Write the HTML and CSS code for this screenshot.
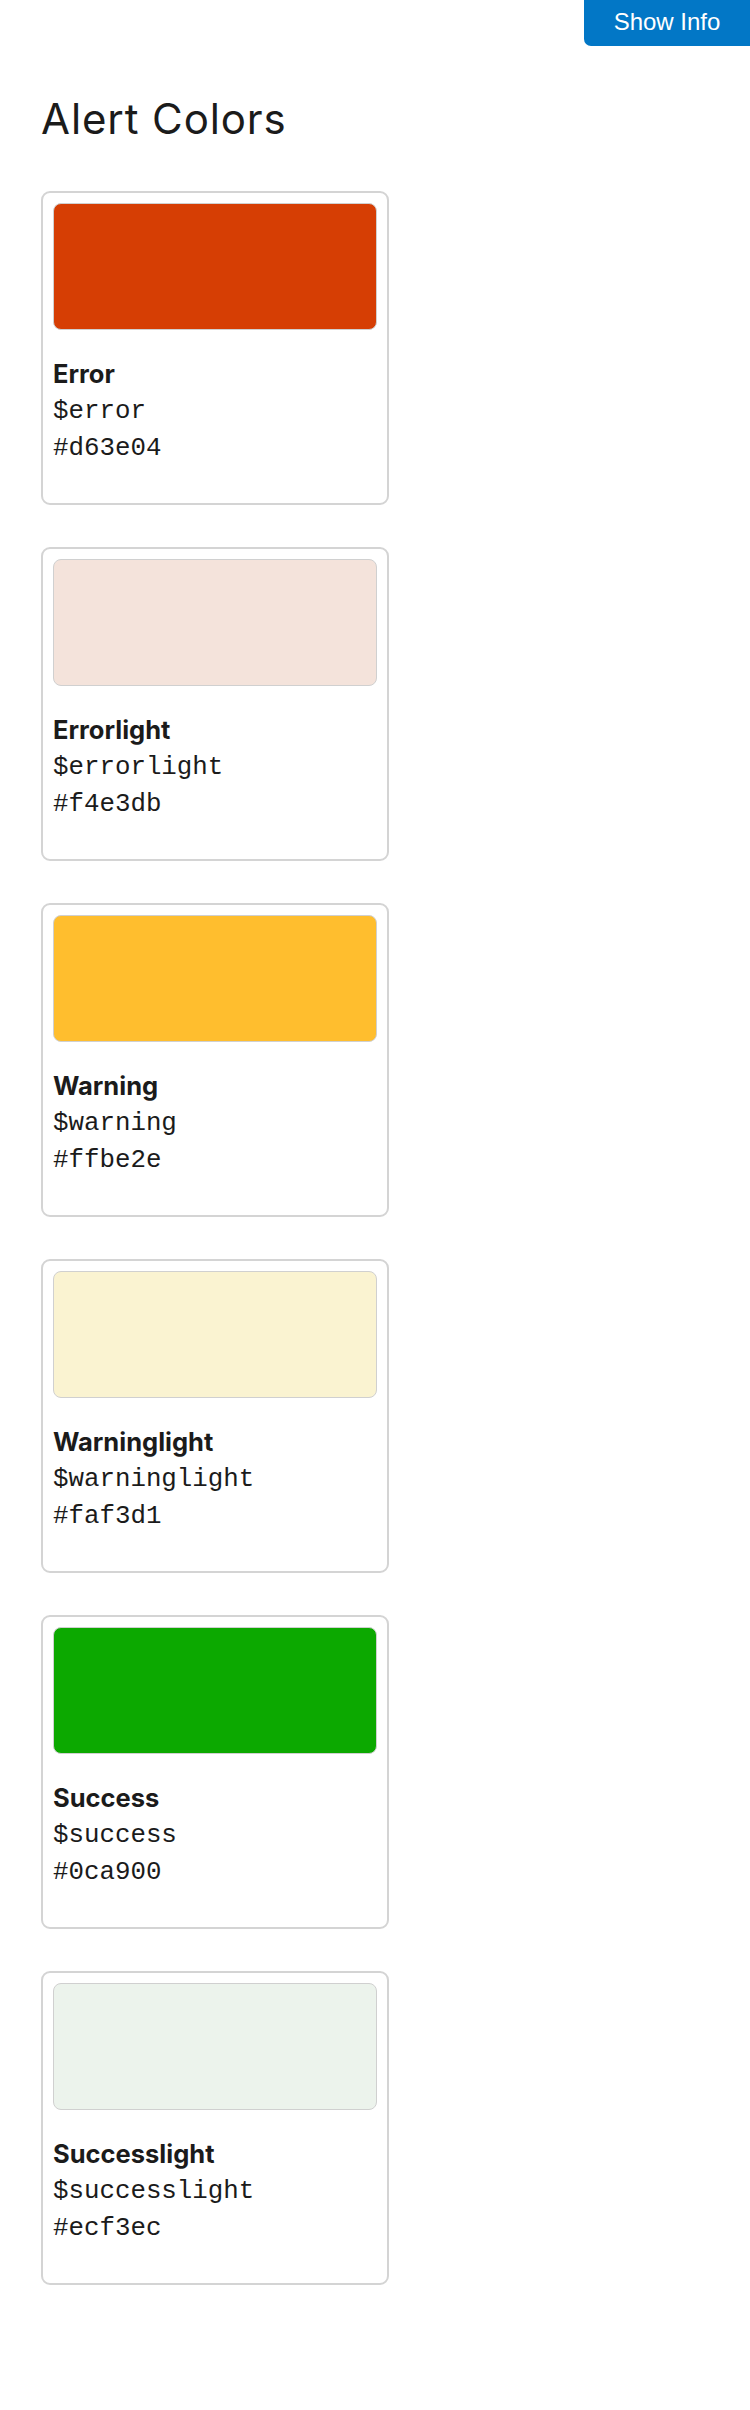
FILE: index.html
```html
<!DOCTYPE html>
<html lang="en">
<head>
<meta charset="utf-8">
<title>Alert Colors</title>
<link rel="stylesheet" href="styles.css">
</head>
<body>
<div class="topbar">
  <button class="info-btn" type="button">Show Info</button>
</div>
<main class="page">
  <h1 class="title">Alert Colors</h1>
  <div class="cards">
    <div class="card">
      <div class="swatch swatch-error"></div>
      <div class="info">
        <div class="name">Error</div>
        <div class="code">$error</div>
        <div class="code">#d63e04</div>
      </div>
    </div>
    <div class="card">
      <div class="swatch swatch-errorlight"></div>
      <div class="info">
        <div class="name">Errorlight</div>
        <div class="code">$errorlight</div>
        <div class="code">#f4e3db</div>
      </div>
    </div>
    <div class="card">
      <div class="swatch swatch-warning"></div>
      <div class="info">
        <div class="name">Warning</div>
        <div class="code">$warning</div>
        <div class="code">#ffbe2e</div>
      </div>
    </div>
    <div class="card">
      <div class="swatch swatch-warninglight"></div>
      <div class="info">
        <div class="name">Warninglight</div>
        <div class="code">$warninglight</div>
        <div class="code">#faf3d1</div>
      </div>
    </div>
    <div class="card">
      <div class="swatch swatch-success"></div>
      <div class="info">
        <div class="name">Success</div>
        <div class="code">$success</div>
        <div class="code">#0ca900</div>
      </div>
    </div>
    <div class="card">
      <div class="swatch swatch-successlight"></div>
      <div class="info">
        <div class="name">Successlight</div>
        <div class="code">$successlight</div>
        <div class="code">#ecf3ec</div>
      </div>
    </div>
  </div>
</main>
</body>
</html>
```

FILE: styles.css
```css
html, body {
  margin: 0;
  padding: 0;
  background: #ffffff;
  color: #1b1b1b;
  font-family: Inter, "Liberation Sans", sans-serif;
}

.topbar {
  display: flex;
  justify-content: flex-end;
}

.info-btn {
  height: 46px;
  width: 166px;
  margin: 0;
  padding: 0 0 2px 0;
  border: none;
  border-radius: 0 0 0 7px;
  background: #0277c6;
  color: #ffffff;
  font-family: "Liberation Sans", Arial, sans-serif;
  font-size: 24px;
  line-height: 44px;
  text-align: center;
}

.page {
  padding: 0 0 100px 41px;
}

.title {
  margin: 48px 0 47px 0;
  font-family: Inter, "Liberation Sans", sans-serif;
  font-weight: 400;
  font-size: 42px;
  line-height: 50px;
  letter-spacing: 0.9px;
  color: #1b1b1b;
}

.cards {
  display: flex;
  flex-direction: column;
  gap: 42px;
}

.card {
  box-sizing: border-box;
  width: 348px;
  height: 314px;
  border: 2px solid #d4d4d4;
  border-radius: 9px;
  padding: 10px;
  display: flex;
  flex-direction: column;
}

.swatch {
  box-sizing: border-box;
  height: 127px;
  border: 1.5px solid #d0d0d0;
  border-radius: 8px;
}

.swatch-error { background: #d63e04; }
.swatch-errorlight { background: #f4e3db; }
.swatch-warning { background: #ffbe2e; }
.swatch-warninglight { background: #faf3d1; }
.swatch-success { background: #0ca900; }
.swatch-successlight { background: #ecf3ec; }

.info {
  margin-top: 25px;
}

.name {
  font-family: Inter, "Liberation Sans", sans-serif;
  font-weight: 700;
  font-size: 25.5px;
  line-height: 37.5px;
}

.code {
  font-family: "Liberation Mono", "Courier New", monospace;
  font-size: 25.8px;
  line-height: 37.5px;
}
```
